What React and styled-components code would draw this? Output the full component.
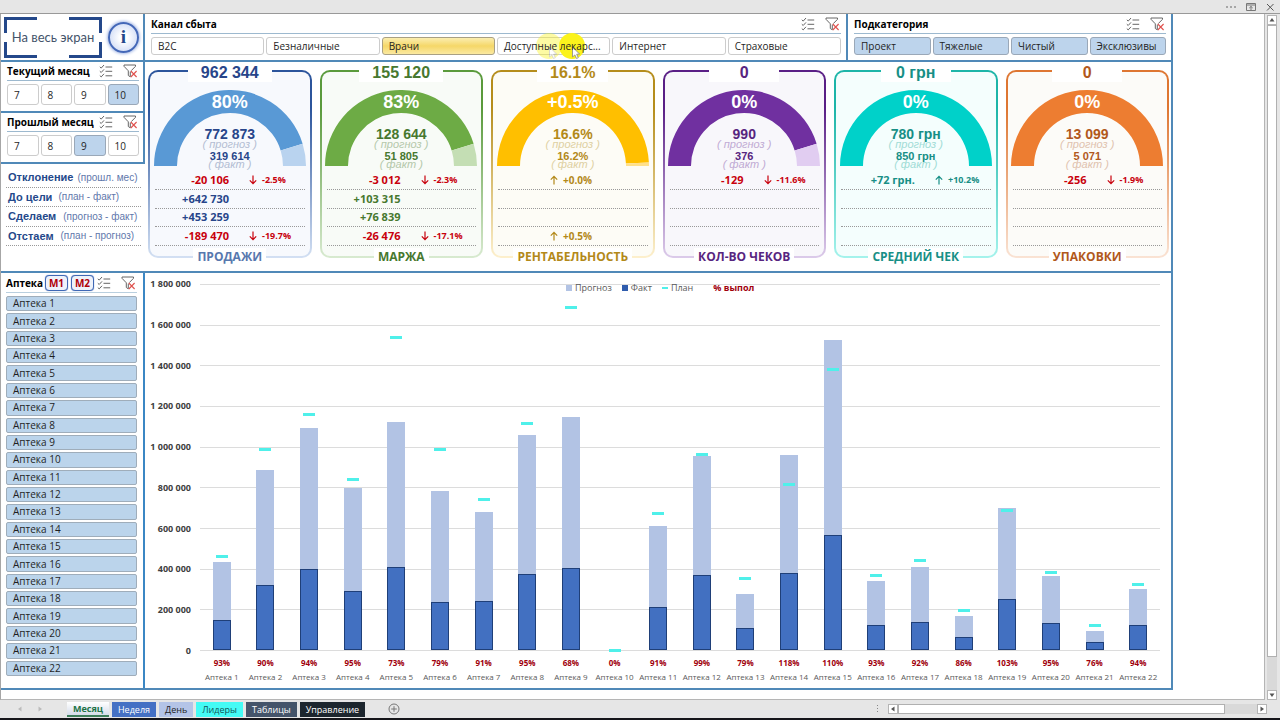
import React, { useState } from 'react';
import styled, { createGlobalStyle, css } from 'styled-components';

const GlobalStyle = createGlobalStyle`
  * { box-sizing: border-box; }
  body { margin: 0; background: #fff; color: #1f1f1f; font-family: 'Open Sans', 'Noto Sans', sans-serif; font-size: 10px; }
  button { font: inherit; color: inherit; margin: 0; padding: 0; cursor: pointer; }
`;

const BLUE = '#5089b8';

const Window = styled.div`
  min-height: 100vh;
  display: flex;
  flex-direction: column;
  border-bottom: 2px solid #15151a;
`;

const TitleBar = styled.header`
  height: 14px;
  display: flex;
  justify-content: flex-end;
  align-items: center;
  gap: 9px;
  padding-right: 5px;
  background: #e6e6e6;
  border-bottom: 1px solid #999;
`;

const IconButton = styled.button`
  display: flex;
  border: 0;
  background: none;
`;

const Workspace = styled.div`
  flex: 1;
  display: flex;
`;

const Sheet = styled.main`
  flex: 1;
  min-width: 0;
  padding-right: 91px;
  border-left: 1px solid #a6a6a6;
  border-right: 1px solid #b5b5b5;
  border-bottom: 1px solid #b5b5b5;
`;

const Dashboard = styled.div`
  border-right: 2px solid ${BLUE};
`;

const Band = styled.section`
  display: grid;
  grid-template-columns: 144px minmax(0, 1fr);
  border-bottom: 2px solid ${BLUE};
`;

const TopLeft = styled.div`
  display: flex;
  align-items: center;
  gap: 6px;
  padding-left: 3px;
  border-right: 2px solid ${BLUE};
`;

const FullscreenButton = styled.button`
  width: 98px;
  height: 41px;
  border: 0;
  color: #44546a;
  font-family: Lato, sans-serif;
  font-size: 13px;
  white-space: nowrap;
  /* eight strokes that make up the four corner brackets */
  --c: linear-gradient(#24488a, #24488a);
  background:
    var(--c) 0 0 / 33px 3px, var(--c) 0 0 / 3px 16px,
    var(--c) 100% 0 / 33px 3px, var(--c) 100% 0 / 3px 16px,
    var(--c) 0 100% / 33px 3px, var(--c) 0 100% / 3px 16px,
    var(--c) 100% 100% / 33px 3px, var(--c) 100% 100% / 3px 16px;
  background-repeat: no-repeat;
`;

const InfoButton = styled.button`
  width: 31px;
  height: 31px;
  border: 2px solid #4468b8;
  border-radius: 50%;
  background: radial-gradient(#fff 20%, #c3d2f3);
  box-shadow: 0 0 3px 1px #a9bce8;
  color: #24488a;
  font: bold 19px/26px 'Liberation Serif', serif;
`;

const Slicers = styled.div`
  display: grid;
  grid-template-columns: minmax(0, 703fr) minmax(0, 323fr);
`;

const SlicerBox = styled.div`
  padding: ${(p) => (p.$month ? '1px 4px 6px 6px' : '2px 5px 5px 6px')};
  ${(p) => p.$divider && `border-right: 2px solid ${BLUE};`}
  ${(p) => p.$month && `
    border-right: 2px solid ${BLUE};
    border-bottom: 2px solid ${BLUE};
  `}
`;

const SlicerHead = styled.div`
  height: 18px;
  display: flex;
  align-items: center;
  padding-bottom: 1px;
  border-bottom: 1px solid #9db9cf;
`;

const SlicerTitle = styled.h2`
  flex: 1;
  margin: 0;
  color: #000;
  font-size: 10px;
  line-height: 12px;
  font-weight: 700;
  white-space: nowrap;
`;

const SlicerItems = styled.div`
  display: flex;
  gap: 2px;
  padding-top: 3px;
`;

const selectedFill = {
  blue: css`background: #bdd4ec; border-color: #9aa8b8;`,
  gold: css`background: linear-gradient(#fbeeb0, #f5d768 50%, #fbe9a0); border-color: #a9a083;`,
};

const SlicerItem = styled.button`
  position: relative;
  isolation: isolate;
  flex: 1 1 0;
  min-width: 0;
  height: ${(p) => (p.$tall ? 21 : 18)}px;
  padding-left: 6px;
  border: 1px solid #ccc;
  border-radius: 3px;
  background: #fff;
  text-align: left;
  white-space: nowrap;
  ${(p) => p['aria-pressed'] && selectedFill[p.$tone || 'blue']}
`;

const Pointer = styled.span`
  position: absolute;
  z-index: -1;
  top: -6px;
  left: ${(p) => p.$left}px;
  opacity: ${(p) => p.$opacity};
  pointer-events: none;
  svg { display: block; }
`;

const Measures = styled.div`
  padding: 4px 4px 0 5px;
`;

const RowStack = styled.div`
  height: 78px;
  display: flex;
  flex-direction: column;
`;

const MeasureRow = styled.div`
  flex: 1;
  display: flex;
  align-items: center;
  gap: ${(p) => p.$gap}px;
  padding-left: 2px;
  border-bottom: 1px dotted #999;
  color: #5f78ab;
  font: 10px 'Liberation Sans', Arial, sans-serif;
  white-space: nowrap;
  strong { color: #24488a; font-size: 11px; }
`;

const Cards = styled.div`
  display: grid;
  grid-template-columns: repeat(6, minmax(0, 1fr));
  gap: 8px;
  padding: 8px 2px 13px 3px;
`;

const Card = styled.article`
  display: flex;
  flex-direction: column;
  align-items: center;
  border: 2px solid transparent;
  border-radius: 10px;
  background:
    linear-gradient(${(p) => p.$fill}, ${(p) => p.$fill}) padding-box,
    linear-gradient(${(p) => p.$dark}, ${(p) => p.$dark} 20%, ${(p) => p.$pale}) border-box;
`;

const CardValue = styled.div`
  min-width: 70px;
  margin-top: -9px;
  padding: 0 13px;
  background: #fff;
  color: ${(p) => p.$color};
  font: bold 16px/19px 'Liberation Sans', Arial, sans-serif;
  text-align: center;
  white-space: nowrap;
`;

const CardName = styled.h3`
  margin: 2px 0 -10px;
  padding: 0 4px;
  background: #fff;
  color: ${(p) => p.$color};
  font-size: 12px;
  font-weight: 700;
  line-height: 18px;
  white-space: nowrap;
`;

const GaugeBox = styled.div`
  display: grid;
  margin: 8px 0 2px;
  > * { grid-area: 1 / 1; }
  svg { display: block; }
`;

const GaugeText = styled.div`
  display: flex;
  flex-direction: column;
  align-items: center;
  margin-bottom: -4px;
  color: ${(p) => p.$color};
  font-family: 'Liberation Sans', Arial, sans-serif;
  white-space: nowrap;
  b { color: #fff; font-size: 18px; line-height: 24px; }
  strong { margin-top: 12px; font-size: 14px; line-height: 16px; }
  strong ~ strong { margin-top: 0; font-size: 11px; line-height: 12px; }
  i { margin-top: -4px; color: ${(p) => p.$muted}; font-size: 11px; line-height: 12px; }
`;

const CardRows = styled(RowStack)`
  align-self: stretch;
  margin: 0 5px;
`;

const DeltaRow = styled.div`
  flex: 1;
  display: grid;
  grid-template-columns: ${(p) => (p.$single ? '52px 1fr' : '74px 1fr')};
  column-gap: ${(p) => (p.$single ? 0 : 20)}px;
  align-items: center;
  border-bottom: 1px dotted #999;
  color: ${(p) => p.$color};
  font-size: 11px;
  font-weight: 700;
  line-height: 14px;
  white-space: nowrap;
  &:first-child { padding-top: 3px; }
`;

const Amount = styled.span`
  text-align: right;
`;

const Trend = styled.span`
  display: flex;
  align-items: center;
  gap: 5px;
  font-size: ${(p) => (p.$single ? 10 : 9)}px;
`;

const PharmacyPanel = styled.aside`
  display: flex;
  flex-direction: column;
  padding: 0 6px 12px 5px;
  border-right: 2px solid #3b87c4;
`;

const PharmacyHead = styled.div`
  height: 20px;
  display: flex;
  align-items: center;
  gap: 3px;
  border-bottom: 1px solid #b9cfdf;
`;

const PharmacyTitle = styled(SlicerTitle)`
  flex: none;
  width: 36px;
`;

const ModeButton = styled.button`
  width: 24px;
  height: 16px;
  border: 1px solid #3f68b5;
  border-radius: 4px;
  background: #eef2fa;
  box-shadow: 0 0 1px #3f68b5;
  color: #b00008;
  font-weight: 700;
  line-height: 14px;
`;

const HeadIcons = styled.div`
  display: flex;
  gap: 10px;
  padding-right: 1px;
`;

const PharmacyList = styled.div`
  height: 380px;
  display: flex;
  flex-direction: column;
  gap: 2px;
  margin-top: 3px;
`;

const PharmacyItem = styled.button`
  flex: 1;
  padding-left: 6px;
  border: 1px solid #9fadba;
  border-radius: 2px;
  background: ${(p) => (p['aria-pressed'] ? '#bbd4eb' : '#fff')};
  line-height: 13px;
  text-align: left;
`;

const ChartPanel = styled.figure`
  position: relative;
  display: grid;
  grid-template-columns: 46px minmax(0, 1fr);
  column-gap: 9px;
  margin: 0;
  padding: 11px 11px 0 0;
`;

const Axis = styled.div`
  height: 379px;
  display: flex;
  flex-direction: column;
  justify-content: space-between;
  margin-top: -6px;
  color: #404040;
  font-size: 9px;
  font-weight: 700;
  line-height: 12px;
  text-align: right;
  white-space: nowrap;
`;

const Plot = styled.div`
  display: grid;
  align-items: start;
  > * { grid-area: 1 / 1; }
`;

const GridLines = styled.div`
  height: 367px;
  display: flex;
  flex-direction: column;
  justify-content: space-between;
  span { height: 1px; background: #dcdcdc; }
`;

const Columns = styled.div`
  display: grid;
  grid-template-columns: repeat(22, minmax(0, 1fr));
`;

const Column = styled.div`
  display: flex;
  flex-direction: column;
  align-items: center;
  color: #595959;
  font-size: 8px;
  line-height: 14px;
  white-space: nowrap;
  b { margin-top: 6px; color: #a0000c; }
`;

const BarArea = styled.div`
  position: relative;
  width: 18px;
  height: 366px;
`;

const Bar = styled.div`
  position: absolute;
  bottom: 0;
  left: 0;
  width: 100%;
  background: ${(p) => (p.$fact ? '#4270c1' : '#b2c3e4')};
  ${(p) => p.$fact && 'box-shadow: inset 0 0 0 1px #1f3f78;'}
`;

const PlanMark = styled.div`
  position: absolute;
  left: 3px;
  width: 12px;
  height: 3px;
  margin-bottom: -2px;
  background: #4ff0ea;
`;

const Legend = styled.figcaption`
  position: absolute;
  top: 9px;
  left: 421px;
  display: flex;
  align-items: center;
  gap: 10px;
  color: #595959;
  font-size: 9px;
  line-height: 12px;
  b { margin-left: 10px; color: #a0000c; }
`;

const LegendItem = styled.span`
  display: flex;
  align-items: center;
  gap: 3px;
  &::before {
    content: '';
    width: 6px;
    height: ${(p) => (p.$line ? 2 : 6)}px;
    background: ${(p) => p.$color};
  }
`;

const ScrollColumn = styled.div`
  width: 15px;
  display: flex;
  flex-direction: column;
  padding: 1px 2px 0;
  background: #e6e6e6;
`;

const ScrollButton = styled.button`
  width: 10px;
  height: 10px;
  flex: none;
  display: grid;
  place-items: center;
  border: 1px solid #b5b5b5;
  background: #fff;
`;

const Track = styled.div`
  flex: 1;
  display: flex;
  width: ${(p) => (p.$vertical ? '10px' : 'auto')};
  flex-direction: ${(p) => (p.$vertical ? 'column' : 'row')};
  background: #d9d9d9;
`;

const Thumb = styled.div`
  flex: 0 0 ${(p) => p.$size}%;
  border: 1px solid #b0b0b0;
  background: #fff;
`;

const TabBar = styled.footer`
  height: 18px;
  display: flex;
  align-items: center;
  background: #e6e6e6;
`;

const Steps = styled.div`
  width: 67px;
  display: flex;
  gap: 14px;
  padding-left: 17px;
`;

const Tabs = styled.nav`
  display: flex;
  gap: 3px;
  margin-right: 23px;
`;

const Tab = styled.button`
  height: 15px;
  padding: 0 6px;
  border: 0;
  background: ${(p) => p.$bg};
  color: ${(p) => p.$color};
  font-size: 9px;
  ${(p) => p['aria-current'] && 'font-weight: 700; border-bottom: 2px solid #3d7d5a; line-height: 13px;'}
`;

const BottomScroll = styled.div`
  width: 403px;
  display: flex;
  align-items: center;
  margin-left: auto;
  padding-right: 13px;
  > div { height: 10px; }
  > svg { margin-right: 9px; }
`;

const CheckListIcon = () => (
  <svg width="14" height="14" viewBox="0 0 14 14" fill="none" stroke="#666" strokeWidth="1" aria-hidden="true">
    <path d="M.8 2.8l1.4 1.3L5 1M.8 7.2l1.4 1.3L5 5.4M.8 11.6l1.4 1.3L5 9.8M6.5 3h6.7M6.5 7.3h6.7M6.5 11.8h6.7" />
  </svg>
);

const ClearFilterIcon = () => (
  <svg width="15" height="14" viewBox="0 0 15 14" fill="none" aria-hidden="true">
    <path d="M1 1h11.5v1.3L8.3 6.6M1 1v1.3l4.3 4.5v4.7l2 1.3V7.6" stroke="#666" />
    <path d="M7.8 7l5.8 6M13.6 7l-5.8 6" stroke="#e0524e" strokeWidth="1.1" />
  </svg>
);

const CursorIcon = () => (
  <svg width="30" height="30" viewBox="0 0 30 30" aria-hidden="true">
    <circle cx="15" cy="14" r="13" fill="#fbf31c" />
    <path d="M15.5 15v10l2.4-2.1 1.6 3.6 1.8-.8-1.6-3.5h3z" fill="#fff" stroke="#888" strokeWidth=".8" />
  </svg>
);

const Arrow = ({ down }) => (
  <svg width="8" height="10" viewBox="0 0 8 10" fill="none" stroke="currentColor" strokeWidth="1.2" aria-hidden="true">
    <path d={down ? 'M4 .5v8M.8 5.4L4 8.7l3.2-3.3' : 'M4 9.5v-8M.8 4.6L4 1.3l3.2 3.3'} />
  </svg>
);

const Triangle = ({ turn = 0, color = '#555' }) => (
  <svg width="6" height="6" viewBox="0 0 6 6" aria-hidden="true">
    <path d="M3 1l2.5 3.5h-5z" fill={color} transform={`rotate(${turn} 3 3)`} />
  </svg>
);

// half-ring, outer radius 76 and inner radius 53
const ringPath = (from, to) => {
  const point = (share, r) => {
    const a = Math.PI * (1 - share);
    return `${76 + r * Math.cos(a)} ${76 - r * Math.sin(a)}`;
  };
  return `M${point(from, 76)}A76 76 0 0 1 ${point(to, 76)}L${point(to, 53)}A53 53 0 0 0 ${point(from, 53)}Z`;
};

const SlicerTools = () => (
  <HeadIcons>
    <IconButton aria-label="Множественный выбор"><CheckListIcon /></IconButton>
    <IconButton aria-label="Очистить фильтр"><ClearFilterIcon /></IconButton>
  </HeadIcons>
);

const Slicer = ({ title, items, initial, tone, month, divider }) => {
  const [selected, setSelected] = useState(initial);
  const toggle = (item) =>
    setSelected((prev) => (prev.includes(item) ? prev.filter((i) => i !== item) : [...prev, item]));

  return (
    <SlicerBox $month={month} $divider={divider}>
      <SlicerHead>
        <SlicerTitle>{title}</SlicerTitle>
        <SlicerTools />
      </SlicerHead>
      <SlicerItems>
        {items.map((item) => (
          <SlicerItem
            key={item}
            $tall={month}
            $tone={tone}
            aria-pressed={selected.includes(item)}
            onClick={() => toggle(item)}
          >
            {item}
            {item.startsWith('Доступные') && (
              <>
                <Pointer $left={36} $opacity={0.4}><CursorIcon /></Pointer>
                <Pointer $left={59} $opacity={1}><CursorIcon /></Pointer>
              </>
            )}
          </SlicerItem>
        ))}
      </SlicerItems>
    </SlicerBox>
  );
};

const months = ['7', '8', '9', '10'];
const channels = ['B2C', 'Безналичные', 'Врачи', 'Доступные лекарс...', 'Интернет', 'Страховые'];
const categories = ['Проект', 'Тяжелые', 'Чистый', 'Эксклюзивы'];

const measures = [
  ['Отклонение', '(прошл. мес)', 4],
  ['До цели', '(план - факт)', 6],
  ['Сделаем', '(прогноз - факт)', 7],
  ['Отстаем', '(план - прогноз)', 7],
];

const cards = [
  {
    name: 'ПРОДАЖИ', nameColor: '#5878ae', value: '962 344', percent: '80%', forecast: '772 873', fact: '319 614',
    dark: '#2c559c', text: '#27458a', ring: '#5999d5', rest: '#b9d3ef', pale: '#d3e0f3', muted: '#b3bdd3', fill: '#f7f9fd', share: 0.905,
    rows: [['-20 106', '-2.5%'], ['+642 730'], ['+453 259'], ['-189 470', '-19.7%']],
  },
  {
    name: 'МАРЖА', value: '155 120', percent: '83%', forecast: '128 644', fact: '51 805',
    dark: '#5a9a3c', text: '#47782f', ring: '#6dab45', rest: '#c4deb4', pale: '#d8ead0', muted: '#b4c8aa', fill: '#f8fbf7', share: 0.905,
    rows: [['-3 012', '-2.3%'], ['+103 315'], ['+76 839'], ['-26 476', '-17.1%']],
  },
  {
    name: 'РЕНТАБЕЛЬНОСТЬ', value: '16.1%', percent: '+0.5%', forecast: '16.6%', fact: '16.2%', single: true,
    dark: '#b58d1c', text: '#b38919', ring: '#ffbf00', rest: '#ffe08a', pale: '#fdf0cd', muted: '#ddd0a2', fill: '#fdfcf6', share: 0.985,
    rows: [['', '+0.0%'], [], [], ['', '+0.5%']],
  },
  {
    name: 'КОЛ-ВО ЧЕКОВ', value: '0', percent: '0%', forecast: '990', fact: '376',
    dark: '#5a1f86', text: '#57257f', ring: '#7030a0', rest: '#e1cdf1', pale: '#dccbea', muted: '#c0aad4', fill: '#f8f7fb', share: 0.905,
    rows: [['-129', '-11.6%'], [], [], []],
  },
  {
    name: 'СРЕДНИЙ ЧЕК', value: '0 грн', percent: '0%', forecast: '780 грн', fact: '850 грн',
    dark: '#1db5a8', text: '#178f86', ring: '#00d1c9', rest: '#00d1c9', pale: '#a5f3ec', muted: '#a0dcd6', fill: '#f4fefd', share: 1,
    rows: [['+72 грн.', '+10.2%'], [], [], []],
  },
  {
    name: 'УПАКОВКИ', value: '0', percent: '0%', forecast: '13 099', fact: '5 071',
    dark: '#de7632', text: '#b1581c', ring: '#ed7d31', rest: '#ed7d31', pale: '#fae3d4', muted: '#e0c2ae', fill: '#fcfbf8', share: 1,
    rows: [['-256', '-1.9%'], [], [], []],
  },
];

// forecast, fact, plan (thousands), completion
const MAX = 1800;
const pharmacies = [
  [431, 150, 463, 93], [886, 318, 987, 90], [1093, 399, 1162, 94], [798, 291, 842, 95],
  [1120, 409, 1541, 73], [783, 236, 987, 79], [680, 241, 744, 91], [1059, 374, 1116, 95],
  [1145, 404, 1687, 68], [0, 0, 0, 0], [611, 212, 672, 91], [955, 367, 965, 99],
  [276, 108, 355, 79], [958, 377, 818, 118], [1527, 564, 1381, 110], [337, 123, 367, 93],
  [409, 140, 443, 92], [167, 64, 199, 86], [699, 251, 687, 103], [364, 133, 384, 95],
  [94, 39, 123, 76], [300, 121, 325, 94],
];

const axisLabels = [
  '1 800 000', '1 600 000', '1 400 000', '1 200 000', '1 000 000',
  '800 000', '600 000', '400 000', '200 000', '0',
];

const tabs = [
  ['Месяц', 'linear-gradient(#fff, #d5dcea)', '#217346'],
  ['Неделя', '#4470c4', '#fff'],
  ['День', '#b4c4e7', '#222'],
  ['Лидеры', '#44fbf5', '#155'],
  ['Таблицы', '#44546a', '#fff'],
  ['Управление', '#1d262e', '#fff'],
];

const percentOf = (value) => `${(value / MAX) * 100}%`;

const KpiCard = ({ card }) => (
  <Card $fill={card.fill} $dark={card.dark} $pale={card.pale}>
    <CardValue $color={card.text}>{card.value}</CardValue>
    <GaugeBox>
      <svg width="152" height="76" viewBox="0 0 152 76" aria-hidden="true">
        <path d={ringPath(0, card.share)} fill={card.ring} />
        {card.share < 1 && <path d={ringPath(card.share, 1)} fill={card.rest} />}
      </svg>
      <GaugeText $color={card.text} $muted={card.muted}>
        <b>{card.percent}</b>
        <strong>{card.forecast}</strong>
        <i>( прогноз )</i>
        <strong>{card.fact}</strong>
        <i>( факт )</i>
      </GaugeText>
    </GaugeBox>
    <CardRows>
      {card.rows.map(([amount, trend], i) => {
        const down = (amount || '').startsWith('-');
        return (
          <DeltaRow key={i} $single={card.single} $color={down ? '#c8000c' : card.text}>
            <Amount>{amount}</Amount>
            {trend && (
              <Trend $single={card.single}>
                <Arrow down={down} />
                {trend}
              </Trend>
            )}
          </DeltaRow>
        );
      })}
    </CardRows>
    <CardName $color={card.nameColor || card.text}>{card.name}</CardName>
  </Card>
);

const Chart = () => (
  <ChartPanel>
    <Axis>
      {axisLabels.map((label) => <span key={label}>{label}</span>)}
    </Axis>
    <Plot>
      <GridLines>
        {axisLabels.map((label) => <span key={label} />)}
      </GridLines>
      <Columns>
        {pharmacies.map(([forecast, fact, plan, done], i) => (
          <Column key={i}>
            <BarArea>
              <Bar style={{ height: percentOf(forecast) }} />
              <Bar $fact style={{ height: percentOf(fact) }} />
              <PlanMark style={{ bottom: percentOf(plan) }} />
            </BarArea>
            <b>{done}%</b>
            <span>Аптека {i + 1}</span>
          </Column>
        ))}
      </Columns>
    </Plot>
    <Legend>
      <LegendItem $color="#b2c3e4">Прогноз</LegendItem>
      <LegendItem $color="#2f5cad">Факт</LegendItem>
      <LegendItem $color="#4ff0ea" $line>План</LegendItem>
      <b>% выпол</b>
    </Legend>
  </ChartPanel>
);

const Pharmacies = () => {
  const [off, setOff] = useState([]);
  return (
    <PharmacyPanel>
      <PharmacyHead>
        <PharmacyTitle>Аптека</PharmacyTitle>
        <ModeButton>M1</ModeButton>
        <ModeButton>M2</ModeButton>
        <SlicerTools />
      </PharmacyHead>
      <PharmacyList>
        {pharmacies.map((_, i) => (
          <PharmacyItem
            key={i}
            aria-pressed={!off.includes(i)}
            onClick={() => setOff((prev) => (prev.includes(i) ? prev.filter((n) => n !== i) : [...prev, i]))}
          >
            Аптека {i + 1}
          </PharmacyItem>
        ))}
      </PharmacyList>
    </PharmacyPanel>
  );
};

export default function App() {
  const [tab, setTab] = useState('Месяц');

  return (
    <Window>
      <GlobalStyle />
      <TitleBar>
        <IconButton aria-label="Ещё">
          <svg width="12" height="10" fill="#555"><circle cx="2" cy="5" r=".8" /><circle cx="6" cy="5" r=".8" /><circle cx="10" cy="5" r=".8" /></svg>
        </IconButton>
        <IconButton aria-label="Показать ленту">
          <svg width="10" height="10" fill="none" stroke="#777"><path d="M.5 1.5h9v7h-9zM.5 3h9M5 8V4.5M3.3 6L5 4.4 6.7 6" /></svg>
        </IconButton>
        <IconButton aria-label="Закрыть">
          <svg width="10" height="10" fill="none" stroke="#555"><path d="M2 2l6.5 6.5M8.5 2L2 8.5" /></svg>
        </IconButton>
      </TitleBar>

      <Workspace>
        <Sheet>
          <Dashboard>
            <Band>
              <TopLeft>
                <FullscreenButton>На весь экран</FullscreenButton>
                <InfoButton aria-label="Информация">i</InfoButton>
              </TopLeft>
              <Slicers>
                <Slicer title="Канал сбыта" items={channels} initial={['Врачи']} tone="gold" divider />
                <Slicer title="Подкатегория" items={categories} initial={categories} />
              </Slicers>
            </Band>

            <Band>
              <div>
                <Slicer title="Текущий месяц" items={months} initial={['10']} month />
                <Slicer title="Прошлый месяц" items={months} initial={['9']} month />
                <Measures>
                  <RowStack>
                    {measures.map(([name, note, gap]) => (
                      <MeasureRow key={name} $gap={gap}>
                        <strong>{name}</strong>
                        <span>{note}</span>
                      </MeasureRow>
                    ))}
                  </RowStack>
                </Measures>
              </div>
              <Cards>
                {cards.map((card) => <KpiCard key={card.name} card={card} />)}
              </Cards>
            </Band>

            <Band>
              <Pharmacies />
              <Chart />
            </Band>
          </Dashboard>
        </Sheet>
        <ScrollColumn>
          <ScrollButton aria-label="Вверх"><Triangle /></ScrollButton>
          <Track $vertical><Thumb $size={95} /></Track>
          <ScrollButton aria-label="Вниз"><Triangle turn={180} /></ScrollButton>
        </ScrollColumn>
      </Workspace>

      <TabBar>
        <Steps>
          <Triangle turn={-90} color="#bbb" />
          <Triangle turn={90} color="#bbb" />
        </Steps>
        <Tabs>
          {tabs.map(([name, bg, color]) => (
            <Tab
              key={name}
              $bg={bg}
              $color={color}
              aria-current={tab === name ? 'page' : undefined}
              onClick={() => setTab(name)}
            >
              {name}
            </Tab>
          ))}
        </Tabs>
        <IconButton aria-label="Новый лист">
          <svg width="12" height="12" fill="none" stroke="#777"><circle cx="6" cy="6" r="5" /><path d="M6 3.2v5.6M3.2 6h5.6" /></svg>
        </IconButton>
        <BottomScroll>
          <svg width="2" height="8" fill="#888" aria-hidden="true"><path d="M0 0h1v1H0zM0 3h1v1H0zM0 6h1v1H0z" /></svg>
          <ScrollButton aria-label="Влево"><Triangle turn={-90} /></ScrollButton>
          <Track><Thumb $size={91} /></Track>
          <ScrollButton aria-label="Вправо"><Triangle turn={90} /></ScrollButton>
        </BottomScroll>
      </TabBar>
    </Window>
  );
}
